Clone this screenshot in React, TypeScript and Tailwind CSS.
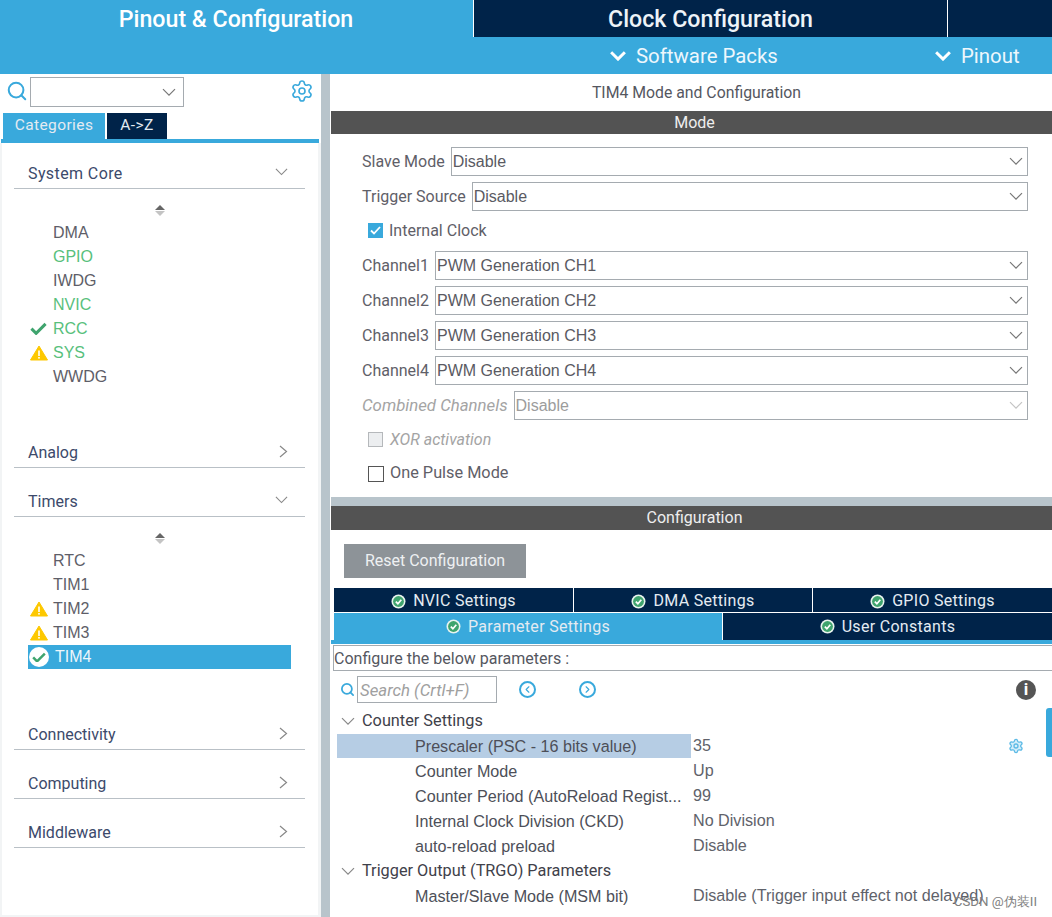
import { ChevronLeft, ChevronRight, Search, Settings } from "lucide-react";

const sans = "font-['Roboto','Liberation_Sans',sans-serif]";
const arial = "font-['Liberation_Sans',Arial,sans-serif]";

const ChevDown = ({ w = 14, stroke = 1.2, className = "" }: { w?: number; stroke?: number; className?: string }) => (
  <svg width={w} height={w * 0.58} viewBox="0 0 14 8" fill="none" className={className}>
    <path d="M1 1 L7 7 L13 1" stroke="currentColor" strokeWidth={stroke} />
  </svg>
);

const ChevRight = ({ className = "" }: { className?: string }) => (
  <svg width="9" height="13" viewBox="0 0 9 13" fill="none" className={className}>
    <path d="M1 1 L7.5 6.5 L1 12" stroke="currentColor" strokeWidth="1.2" />
  </svg>
);

const SectionHeader = ({ title, open, className }: { title: string; open?: boolean; className?: string }) => (
  <div className="ml-[14px] mr-[16px] flex h-[33px] items-center justify-between border-b border-[#b9c0c6] pl-[14px] pr-[17px] text-[16px] text-[#3c4a6b]">
    <span className={`pt-1 ${className ?? ""}`}>{title}</span>
    {open ? <ChevDown w={13} className="text-[#888]" /> : <ChevRight className="text-[#888]" />}
  </div>
);

const Sorter = () => (
  <div className="flex h-[20px] flex-col items-center justify-center gap-[1px] pr-[2px]">
    <div className="h-0 w-0 border-x-[5px] border-b-[5px] border-x-transparent border-b-[#666]" />
    <div className="h-0 w-0 border-x-[5px] border-t-[5px] border-x-transparent border-t-[#c4c4c4]" />
  </div>
);

const Warn = () => (
  <svg width="18" height="16" viewBox="0 0 18 16" className="absolute left-[30px] top-[4px]">
    <path d="M9 1 L17.5 15 H0.5 Z" fill="#fdc800" stroke="#fdc800" strokeLinejoin="round" />
    <rect x="8.2" y="5.5" width="1.6" height="5.5" fill="#fff" />
    <rect x="8.2" y="12" width="1.6" height="1.6" fill="#fff" />
  </svg>
);

const BoldCheck = ({ size, className }: { size: number; className?: string }) => (
  <svg width={size} height={size * 0.78} viewBox="0 0 18 14" className={className}>
    <path d="M1.5 7 L6.5 12 L16.5 2" fill="none" stroke="#3fa46e" strokeWidth="3.2" />
  </svg>
);

type Item = { name: string; color?: string; icon?: "check" | "warn" };

const ListItem = ({ name, color, icon }: Item) => (
  <div className={`relative h-[24px] pl-[53px] text-[16px] leading-[24px] ${arial} ${color ?? "text-[#5e5e68]"}`}>
    {icon === "warn" && <Warn />}
    {icon === "check" && <BoldCheck size={17} className="absolute left-[30px] top-[5px]" />}
    {name}
  </div>
);

const Select = ({ value, disabled }: { value: string; disabled?: boolean }) => (
  <div className={`flex h-[29px] flex-1 items-center justify-between border border-[#a5abb0] pl-[1px] pr-[4px] text-[16px] ${arial}`}>
    <span className={disabled ? "text-[#9c9c9c]" : "text-[#5a5a62]"}>{value}</span>
    <ChevDown w={14} className={disabled ? "text-[#c4c4c4]" : "text-[#777]"} />
  </div>
);

const ModeRow = ({ label, value, disabled, className }: { label: string; value: string; disabled?: boolean; className?: string }) => (
  <div className={`flex items-center gap-[6px] pl-[31px] pr-[24px] text-[16px] ${className ?? ""}`}>
    <span className={disabled ? "text-[16.8px] italic text-[#a4a4a4]" : "text-[#5f6068]"}>{label}</span>
    <Select value={value} disabled={disabled} />
  </div>
);

const TabCheck = () => (
  <svg width="15" height="15" viewBox="0 0 15 15">
    <circle cx="7.5" cy="7.5" r="7" fill="#e8f3ee" />
    <circle cx="7.5" cy="7.5" r="5.4" fill="#3fa46e" />
    <path d="M4.8 7.6 L6.9 9.7 L10.3 5.8" fill="none" stroke="#fff" strokeWidth="1.7" />
  </svg>
);

const ConfigTab = ({ label, active, className }: { label: string; active?: boolean; className?: string }) => (
  <div className={`flex items-center justify-center gap-[7px] text-[16px] tracking-[0.3px] text-[#e4ebf2] ${active ? "bg-[#39a9dc]" : "bg-[#002349]"} ${className ?? ""}`}>
    <TabCheck />
    {label}
  </div>
);

const ParamRow = ({ name, value, selected }: { name: string; value: string; selected?: boolean }) => (
  <div className={`flex h-[25px] items-center pl-[6px] text-[16.15px] text-[#4d4f58] ${arial}`}>
    <div className={`h-[24px] w-[354px] truncate pl-[78px] leading-[24px] ${selected ? "bg-[#b6cde4]" : ""}`}>{name}</div>
    <div className="pl-[2px] text-[#60626a]">{value}</div>
  </div>
);

const TreeHeader = ({ title }: { title: string }) => (
  <div className="flex h-[25px] items-center gap-[7px] pl-[10px] pt-[1px] text-[16.3px] text-[#3f414a]">
    <ChevDown w={14} className="text-[#888]" />
    {title}
  </div>
);

const App = () => {
  return (
    <div className={`flex h-[917px] w-[1052px] flex-col overflow-hidden bg-white ${sans}`}>
      {/* top bars */}
      <div className="flex h-[37px] bg-[#39a9dc] pt-0 text-[23.2px] font-medium text-white">
        <div className="flex w-[473px] items-center justify-center pr-[1px] pt-[2px]">Pinout &amp; Configuration</div>
        <div className="flex w-[474px] items-center justify-center border-l border-white bg-[#002349] pt-[2px] text-[#eef3f8]">Clock Configuration</div>
        <div className="flex-1 border-l border-white bg-[#002349]" />
      </div>
      <div className="flex h-[37px] items-center bg-[#39a9dc] pt-[1px] text-[20.4px] text-[#eef7fc]">
        <div className="ml-[610px] flex w-[325px] items-center gap-[10px]">
          <ChevDown w={16} stroke={2.6} className="text-white" />
          Software Packs
        </div>
        <div className="flex items-center gap-[10px]">
          <ChevDown w={16} stroke={2.6} className="text-white" />
          Pinout
        </div>
      </div>

      <div className="flex min-h-0 flex-1">
        {/* left sidebar */}
        <div className="flex w-[321px] flex-col">
          <div className="flex h-[39px] items-start pl-[6px] pr-[7px] pt-[3px]">
            <Search size={22} strokeWidth={2.2} className="mt-[3px] text-[#39a9dc]" />
            <div className="ml-[2px] flex h-[30px] w-[154px] items-center justify-end border border-[#a5abb0] pr-[7px]">
              <ChevDown w={14} className="text-[#777]" />
            </div>
            <Settings size={24} strokeWidth={1.6} className="ml-auto mt-[2px] text-[#39a9dc]" />
          </div>
          <div className="ml-[1px] mr-[2px] flex h-[30px] border-b-[4px] border-[#39a9dc] pl-[2px] text-[15.5px] tracking-[0.4px] text-[#e4ebf2]">
            <div className="flex h-[26px] w-[102px] items-center justify-center bg-[#39a9dc]">Categories</div>
            <div className="ml-[2px] flex h-[26px] w-[60px] items-center justify-center bg-[#002349]">A-&gt;Z</div>
          </div>
          <div className="flex-1 pt-[13px] shadow-[inset_2px_0_0_#f2f4f5,inset_-3px_0_0_#f2f4f5,inset_0_-2px_0_#f2f4f5]">
            <SectionHeader title="System Core" open className="tracking-[0.4px]" />
            <div className="pt-[11px]">
              <Sorter />
              <div className="pt-[1px]">
                <ListItem name="DMA" />
                <ListItem name="GPIO" color="text-[#58c07c]" />
                <ListItem name="IWDG" />
                <ListItem name="NVIC" color="text-[#58c07c]" />
                <ListItem name="RCC" color="text-[#58c07c]" icon="check" />
                <ListItem name="SYS" color="text-[#58c07c]" icon="warn" />
                <ListItem name="WWDG" />
              </div>
            </div>
            <div className="pt-[46px]">
              <SectionHeader title="Analog" />
            </div>
            <div className="pt-[16px]">
              <SectionHeader title="Timers" open />
            </div>
            <div className="pt-[11px]">
              <Sorter />
              <div className="pt-[1px]">
                <ListItem name="RTC" />
                <ListItem name="TIM1" />
                <ListItem name="TIM2" icon="warn" />
                <ListItem name="TIM3" icon="warn" />
                <div className={`relative ml-[28px] mr-[30px] h-[24px] bg-[#39a9dc] pl-[27px] text-[16px] leading-[24px] text-[#eef6fb] ${arial}`}>
                  <span className="absolute left-[1px] top-[2px] flex h-[20px] w-[20px] items-center justify-center rounded-full bg-white">
                    <BoldCheck size={14} />
                  </span>
                  TIM4
                </div>
              </div>
            </div>
            <div className="pt-[48px]">
              <SectionHeader title="Connectivity" />
            </div>
            <div className="pt-[16px]">
              <SectionHeader title="Computing" />
            </div>
            <div className="pt-[16px]">
              <SectionHeader title="Middleware" />
            </div>
          </div>
        </div>

        {/* splitter */}
        <div className="w-[9px] bg-[#b8c4cb]" />

        {/* right panel */}
        <div className="flex min-w-0 flex-1 flex-col border-l border-white">
          <div className="flex h-[37px] items-center justify-center pl-[10px] text-[15.8px] text-[#55575f]">TIM4 Mode and Configuration</div>
          <div className="flex h-[23px] items-center justify-center bg-[#535353] pl-[6px] text-[16px] text-[#eee]">Mode</div>
          <div className="flex h-[363px] flex-col pt-[13px]">
            <ModeRow label="Slave Mode" value="Disable" />
            <ModeRow label="Trigger Source" value="Disable" className="mt-[6px]" />
            <label className="mt-[5px] flex h-[29px] items-center gap-[6px] pl-[37px] text-[16px] text-[#5f6068]">
              <span className="flex h-[15px] w-[15px] items-center justify-center bg-[#39a9dc]">
                <svg width="11" height="9" viewBox="0 0 11 9" fill="none">
                  <path d="M1 4.5 L4 7.5 L10 1" stroke="#fff" strokeWidth="1.8" />
                </svg>
              </span>
              Internal Clock
            </label>
            <ModeRow label="Channel1" value="PWM Generation CH1" className="mt-[6px]" />
            <ModeRow label="Channel2" value="PWM Generation CH2" className="mt-[6px]" />
            <ModeRow label="Channel3" value="PWM Generation CH3" className="mt-[6px]" />
            <ModeRow label="Channel4" value="PWM Generation CH4" className="mt-[6px]" />
            <ModeRow label="Combined Channels" value="Disable" disabled className="mt-[6px]" />
            <label className="mt-[5px] flex h-[29px] items-center gap-[7px] pl-[37px] text-[16px] italic text-[#a4a4a4]">
              <span className="h-[15px] w-[15px] border border-[#b5b8bb] bg-[#eceef0]" />
              XOR activation
            </label>
            <label className="mt-[5px] flex h-[29px] items-center gap-[6px] pl-[37px] text-[16.3px] text-[#5f6068]">
              <span className="h-[16px] w-[16px] border border-[#555]" />
              One Pulse Mode
            </label>
          </div>
          <div className="h-[9px] bg-[#b8c4cb]" />
          <div className="flex h-[24px] items-center justify-center bg-[#535353] pl-[6px] text-[16px] text-[#eee]">Configuration</div>

          <div className="pl-[13px] pt-[14px]">
            <div className="flex h-[34px] w-[182px] items-center justify-center bg-[#8d9398] text-[16px] text-[#eef0f2]">Reset Configuration</div>
          </div>
          <div className="mt-[10px] flex h-[24px] gap-[1px] pl-[3px]">
            <ConfigTab label="NVIC Settings" className="w-[239px] pt-[2px]" />
            <ConfigTab label="DMA Settings" className="w-[238px] pt-[2px]" />
            <ConfigTab label="GPIO Settings" className="flex-1 pt-[2px]" />
          </div>
          <div className="mt-[1px] flex h-[31px] gap-[1px] border-b-[4px] border-[#39a9dc] pl-[3px]">
            <ConfigTab label="Parameter Settings" active className="w-[388px]" />
            <ConfigTab label="User Constants" className="flex-1" />
          </div>
          <div className="ml-[2px] mt-[1px] flex h-[26px] items-center border border-r-0 border-[#a5abb0] pt-[1px] text-[16px] text-[#55575f]">
            Configure the below parameters :
          </div>
          <div className="relative flex h-[37px] items-center pl-[9px]">
            <Search size={15} strokeWidth={2.8} className="text-[#39a9dc]" />
            <div className="ml-[2px] flex h-[27px] w-[140px] items-center border border-[#a5abb0] pl-[2px] pt-[2px] text-[16.8px] italic text-[#a0a0a0]">Search (Crtl+F)</div>
            <span className="ml-[22px] flex h-[17px] w-[17px] items-center justify-center rounded-full border-2 border-[#39a9dc]">
              <ChevronLeft size={11} strokeWidth={2.5} className="text-[#39a9dc]" />
            </span>
            <span className="ml-[43px] flex h-[17px] w-[17px] items-center justify-center rounded-full border-2 border-[#39a9dc]">
              <ChevronRight size={11} strokeWidth={2.5} className="text-[#39a9dc]" />
            </span>
            <span className="ml-auto mr-[16px] flex h-[20px] w-[20px] items-center justify-center rounded-full bg-[#555] text-[17px] font-bold text-white">i</span>
          </div>
          <div className="relative">
            <div className="absolute right-0 top-0 h-[49px] w-[6px] rounded-l-[3px] bg-[#39a9dc]" />
            <Settings size={16} strokeWidth={2} className="absolute right-[28px] top-[30px] fill-[#d6eefa] text-[#5dbbe6]" />
            <TreeHeader title="Counter Settings" />
            <ParamRow name="Prescaler (PSC - 16 bits value)" value="35" selected />
            <ParamRow name="Counter Mode" value="Up" />
            <ParamRow name="Counter Period (AutoReload Regist..." value="99" />
            <ParamRow name="Internal Clock Division (CKD)" value="No Division" />
            <ParamRow name="auto-reload preload" value="Disable" />
            <TreeHeader title="Trigger Output (TRGO) Parameters" />
            <ParamRow name="Master/Slave Mode (MSM bit)" value="Disable (Trigger input effect not delayed)" />
            <div className="absolute right-[15px] top-[184px] text-[13.3px] text-[#808080]">CSDN @伪装II</div>
          </div>
        </div>
      </div>
    </div>
  );
};

export default App;
